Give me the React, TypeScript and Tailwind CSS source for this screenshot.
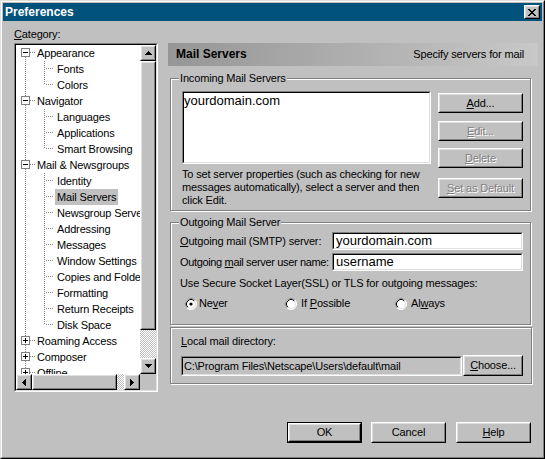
import React from "react";

type TreeNode = {
  label: string;
  level: 0 | 1;
  box?: "minus" | "plus";
  first?: boolean;
  last?: boolean;
  selected?: boolean;
};

const tree: TreeNode[] = [
  { label: "Appearance", level: 0, box: "minus", first: true },
  { label: "Fonts", level: 1 },
  { label: "Colors", level: 1, last: true },
  { label: "Navigator", level: 0, box: "minus" },
  { label: "Languages", level: 1 },
  { label: "Applications", level: 1 },
  { label: "Smart Browsing", level: 1, last: true },
  { label: "Mail & Newsgroups", level: 0, box: "minus" },
  { label: "Identity", level: 1 },
  { label: "Mail Servers", level: 1, selected: true },
  { label: "Newsgroup Servers", level: 1 },
  { label: "Addressing", level: 1 },
  { label: "Messages", level: 1 },
  { label: "Window Settings", level: 1 },
  { label: "Copies and Folders", level: 1 },
  { label: "Formatting", level: 1 },
  { label: "Return Receipts", level: 1 },
  { label: "Disk Space", level: 1, last: true },
  { label: "Roaming Access", level: 0, box: "plus" },
  { label: "Composer", level: 0, box: "plus" },
  { label: "Offline", level: 0, box: "plus" },
];

function Raised({ className = "", children }: { className?: string; children?: React.ReactNode }) {
  return (
    <div className={`border border-t-white border-l-white border-r-black border-b-black ${className}`}>
      <div className="w-full h-full border border-t-[#dfdfdf] border-l-[#dfdfdf] border-r-[#808080] border-b-[#808080] flex items-center justify-center">
        {children}
      </div>
    </div>
  );
}

function Sunken({
  className = "",
  inner = "",
  children,
}: {
  className?: string;
  inner?: string;
  children?: React.ReactNode;
}) {
  return (
    <div className={`border border-t-[#808080] border-l-[#808080] border-b-white border-r-white ${className}`}>
      <div className={`w-full h-full border border-t-black border-l-black border-b-[#dfdfdf] border-r-[#dfdfdf] ${inner}`}>
        {children}
      </div>
    </div>
  );
}

function Arrow({ dir }: { dir: "up" | "down" | "left" | "right" }) {
  const paths = {
    up: "M3 0h1v1H3z M2 1h3v1H2z M1 2h5v1H1z M0 3h7v1H0z",
    down: "M0 0h7v1H0z M1 1h5v1H1z M2 2h3v1H2z M3 3h1v1H3z",
    left: "M3 0h1v7H3z M2 1h1v5H2z M1 2h1v3H1z M0 3h1v1H0z",
    right: "M0 0h1v7H0z M1 1h1v5H1z M2 2h1v3H2z M3 3h1v1H3z",
  };
  const vert = dir === "up" || dir === "down";
  return (
    <svg width={vert ? 7 : 4} height={vert ? 4 : 7} shapeRendering="crispEdges">
      <path d={paths[dir]} fill="#000" />
    </svg>
  );
}

function Gutter({ n }: { n: TreeNode }) {
  const dot = { stroke: "#808080", strokeDasharray: "1 1" };
  if (n.level === 0) {
    return (
      <svg width="19" height="16" className="shrink-0" shapeRendering="crispEdges">
        {!n.first && <line x1="9.5" y1="0" x2="9.5" y2="3" {...dot} />}
        <line x1="9.5" y1="12" x2="9.5" y2="16" {...dot} />
        <line x1="14" y1="7.5" x2="19" y2="7.5" {...dot} />
        <rect x="5.5" y="3.5" width="8" height="8" fill="#fff" stroke="#808080" />
        <line x1="7" y1="7.5" x2="12" y2="7.5" stroke="#000" />
        {n.box === "plus" && <line x1="9.5" y1="5" x2="9.5" y2="10" stroke="#000" />}
      </svg>
    );
  }
  return (
    <svg width="39" height="16" className="shrink-0" shapeRendering="crispEdges">
      <line x1="9.5" y1="0" x2="9.5" y2="16" {...dot} />
      <line x1="28.5" y1="0" x2="28.5" y2={n.last ? 8 : 16} {...dot} />
      <line x1="30" y1="7.5" x2="37" y2="7.5" {...dot} />
    </svg>
  );
}

function Radio({ checked }: { checked?: boolean }) {
  return (
    <svg width="12" height="12" viewBox="0 0 12 12" className="shrink-0">
      <circle cx="6" cy="6" r="5.5" fill="#fff" stroke="#fff" />
      <path d="M2.11 9.89 A5.5 5.5 0 0 1 9.89 2.11" fill="none" stroke="#808080" />
      <circle cx="6" cy="6" r="4.5" fill="#fff" stroke="#dfdfdf" />
      <path d="M2.82 9.18 A4.5 4.5 0 0 1 9.18 2.82" fill="none" stroke="#000" />
      {checked && <circle cx="6" cy="6" r="1.6" fill="#000" />}
    </svg>
  );
}

function GroupBox({
  className = "",
  label,
  children,
}: {
  className?: string;
  label?: string;
  children?: React.ReactNode;
}) {
  return (
    <div className={`relative border border-[#808080] shadow-[inset_1px_1px_0_#fff,1px_1px_0_#fff] ${className}`}>
      {label && (
        <span className="absolute -top-[7px] left-[8px] bg-[#c0c0c0] px-px leading-[13px]">{label}</span>
      )}
      {children}
    </div>
  );
}

const disabled = "text-[#808080] [text-shadow:1px_1px_0_#fff]";

export default function App() {
  return (
    <div className="w-[545px] h-[459px] [font-family:'Liberation_Sans',Arial,sans-serif] text-[11px] leading-[13px] tracking-[-0.15px] text-black">
      <div className="w-full h-full flex flex-col bg-[#c0c0c0] border border-t-[#dfdfdf] border-l-[#dfdfdf] border-r-black border-b-black">
        <div className="flex-1 flex flex-col border border-t-white border-l-white border-r-[#808080] border-b-[#808080] p-px">
          {/* title bar */}
          <div className="h-[18px] shrink-0 bg-[#01527c] flex items-center justify-between pl-[2px] pr-[2px]">
            <span className="text-white font-bold text-[12px] tracking-normal">Preferences</span>
            <Raised className="w-[16px] h-[14px] bg-[#c0c0c0]">
              <svg width="8" height="7" shapeRendering="crispEdges">
                <path
                  d="M0 0h2v1H0z M6 0h2v1H6z M1 1h2v1H1z M5 1h2v1H5z M2 2h4v1H2z M3 3h2v1H3z M2 4h4v1H2z M1 5h2v1H1z M5 5h2v1H5z M0 6h2v1H0z M6 6h2v1H6z"
                  fill="#000"
                />
              </svg>
            </Raised>
          </div>

          {/* body */}
          <div className="flex pt-[7px] pl-[11px]">
            {/* category tree */}
            <div className="w-[144px] flex flex-col">
              <div className="h-[15px]">
                <u>C</u>ategory:
              </div>
              <Sunken className="h-[349px]" inner="grid grid-cols-[124px_16px] grid-rows-[329px_16px] bg-white">
                <div className="overflow-hidden">
                  {tree.map((n) => (
                    <div key={n.label} className="flex h-[16px] items-center whitespace-nowrap">
                      <Gutter n={n} />
                      <span
                        className={`inline-block h-[16px] leading-[16px] px-[2px] ${n.selected ? "bg-[#c0c0c0]" : ""}`}
                      >
                        {n.label}
                      </span>
                    </div>
                  ))}
                </div>
                <div className="flex flex-col bg-[#c0c0c0]">
                  <Raised className="h-[16px] shrink-0 bg-[#c0c0c0]">
                    <Arrow dir="up" />
                  </Raised>
                  <Raised className="h-[269px] shrink-0 bg-[#c0c0c0]" />
                  <div className="flex-1 bg-[repeating-conic-gradient(#c0c0c0_0%_25%,#fff_0%_50%)] [background-size:2px_2px]" />
                  <Raised className="h-[16px] shrink-0 bg-[#c0c0c0]">
                    <Arrow dir="down" />
                  </Raised>
                </div>
                <div className="flex bg-[#c0c0c0]">
                  <Raised className="w-[16px] shrink-0">
                    <Arrow dir="left" />
                  </Raised>
                  <Raised className="w-[85px] shrink-0" />
                  <div className="flex-1 bg-[repeating-conic-gradient(#c0c0c0_0%_25%,#fff_0%_50%)] [background-size:2px_2px]" />
                  <Raised className="w-[16px] shrink-0">
                    <Arrow dir="right" />
                  </Raised>
                </div>
                <div className="bg-[#c0c0c0]" />
              </Sunken>
            </div>

            {/* right panel */}
            <div className="ml-[10px] w-[370px] mt-[15px] flex flex-col">
              <div className="h-[23px] bg-linear-to-r from-[#969696] to-[#c8c8c8] flex items-center justify-between pl-[8px] pr-[14px]">
                <span className="font-bold text-[12px] tracking-normal">Mail Servers</span>
                <span>Specify servers for mail</span>
              </div>

              {/* incoming */}
              <GroupBox className="mt-[12px] ml-[2px] w-[361px] h-[133px]" label="Incoming Mail Servers">
                <div className="flex pt-[12px] pl-[11px]">
                  <div className="w-[249px] flex flex-col">
                    <Sunken className="h-[73px]" inner="bg-white">
                      <div className="text-[13px] leading-[16px] tracking-normal">yourdomain.com</div>
                    </Sunken>
                    <p className="mt-[4px] leading-[13px]">
                      To set server properties (such as checking for new messages automatically), select a server and then
                      click Edit.
                    </p>
                  </div>
                  <div className="ml-[7px] w-[85px] flex flex-col">
                    <Raised className="mt-[2px] h-[20px]">
                      <span>
                        <u>A</u>dd...
                      </span>
                    </Raised>
                    <Raised className="mt-[8px] h-[20px]">
                      <span className={disabled}>
                        <u>E</u>dit...
                      </span>
                    </Raised>
                    <Raised className="mt-[7px] h-[20px]">
                      <span className={disabled}>
                        <u>D</u>elete
                      </span>
                    </Raised>
                    <Raised className="mt-[10px] h-[20px]">
                      <span className={disabled}>
                        <u>S</u>et as Default
                      </span>
                    </Raised>
                  </div>
                </div>
              </GroupBox>

              {/* outgoing */}
              <GroupBox className="mt-[11px] ml-[2px] w-[361px] h-[103px]" label="Outgoing Mail Server">
                <div className="flex flex-col pt-[9px] pl-[9px]">
                  <div className="flex items-center">
                    <span className="w-[152px]">
                      <u>O</u>utgoing mail (SMTP) server:
                    </span>
                    <Sunken className="w-[191px] h-[18px]" inner="bg-white flex items-center pl-[2px]">
                      <span className="text-[13px] leading-[14px] tracking-normal">yourdomain.com</span>
                    </Sunken>
                  </div>
                  <div className="flex items-center mt-[3px]">
                    <span className="w-[152px] whitespace-nowrap tracking-[-0.35px]">
                      Outgoing <u>m</u>ail server user name:
                    </span>
                    <Sunken className="w-[191px] h-[18px]" inner="bg-white flex items-center pl-[2px]">
                      <span className="text-[13px] leading-[14px] tracking-normal">username</span>
                    </Sunken>
                  </div>
                  <div className="mt-[6px]">Use Secure Socket Layer(SSL) or TLS for outgoing messages:</div>
                  <div className="mt-[7px] ml-[5px] flex h-[13px] items-center">
                    <div className="w-[100px] flex items-center">
                      <Radio checked />
                      <span className="ml-[2px]">
                        Ne<u>v</u>er
                      </span>
                    </div>
                    <div className="w-[110px] flex items-center">
                      <Radio />
                      <span className="ml-[4px]">
                        If <u>P</u>ossible
                      </span>
                    </div>
                    <div className="flex items-center">
                      <Radio />
                      <span className="ml-[4px]">
                        Al<u>w</u>ays
                      </span>
                    </div>
                  </div>
                </div>
              </GroupBox>

              {/* local mail dir */}
              <GroupBox className="mt-[2px] ml-[2px] w-[362px] h-[57px]">
                <div className="flex flex-col pt-[7px] pl-[10px]">
                  <div className="h-[13px]">
                    <u>L</u>ocal mail directory:
                  </div>
                  <div className="mt-[8px] flex items-start">
                    <Sunken className="w-[281px] h-[20px]" inner="bg-[#c0c0c0] flex items-center pl-[1px] whitespace-nowrap">
                      C:\Program Files\Netscape\Users\default\mail
                    </Sunken>
                    <Raised className="ml-[1px] -mt-px w-[60px] h-[21px]">
                      <span>
                        <u>C</u>hoose...
                      </span>
                    </Raised>
                  </div>
                </div>
              </GroupBox>
            </div>
          </div>

          {/* dialog buttons */}
          <div className="mt-[30px] flex justify-end pr-[11px] gap-[9px]">
            <div className="border border-black w-[75px] h-[21px]">
              <Raised className="w-full h-full">OK</Raised>
            </div>
            <Raised className="w-[75px] h-[21px]">Cancel</Raised>
            <Raised className="ml-px w-[75px] h-[21px]">
              <span>
                <u>H</u>elp
              </span>
            </Raised>
          </div>
        </div>
      </div>
    </div>
  );
}
